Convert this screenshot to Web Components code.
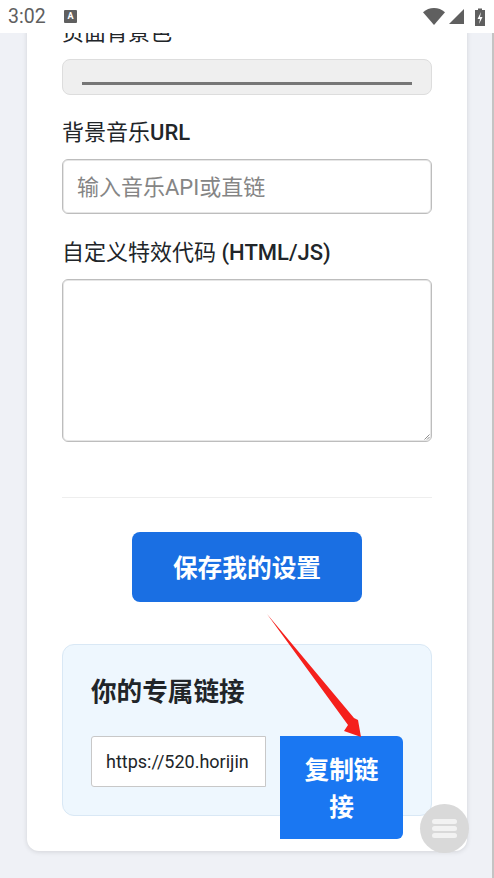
<!DOCTYPE html>
<html lang="zh">
<head>
<meta charset="utf-8">
<title>设置</title>
<style>
  html, body { margin: 0; height: 100%; }
  body {
    display: flex;
    flex-direction: column;
    height: 878px;
    overflow: hidden;
    position: relative;
    background: #eff1f6;
    font-family: Roboto, "Noto Sans CJK SC", sans-serif;
    color: #212529;
  }
</style>
</head>
<body>
<status-bar></status-bar>
<settings-page>
  <settings-field label="页面背景色">
    <color-swatch></color-swatch>
  </settings-field>
  <settings-field label="背景音乐" strong="URL">
    <text-box placeholder>输入音乐API或直链</text-box>
  </settings-field>
  <settings-field label="自定义特效代码" strong="(HTML/JS)">
    <code-box></code-box>
  </settings-field>
  <save-button>保存我的设置</save-button>
  <link-panel heading="你的专属链接">
    <link-box>https://520.horijin</link-box>
    <copy-button>复制链接</copy-button>
  </link-panel>
</settings-page>
<arrow-note></arrow-note>
<menu-fab></menu-fab>

<script>
function shadow(el, html) {
  el.attachShadow({mode: 'open'}).innerHTML = html;
}

class StatusBar extends HTMLElement {
  connectedCallback() {
    shadow(this, `
    <style>
      :host { display: flex; align-items: center; flex: none; height: 33px; background: #fff; color: #5f5f5f; padding: 0 9px 0 8px; }
      .time { font-size: 19.5px; line-height: 33px; width: 56px; }
      .app { width: 13px; height: 13px; background: #5f5f5f; border-radius: 1px; color: #fff; font-size: 9px; font-weight: 700; line-height: 12px; text-align: center; }
      .right { margin-left: auto; display: flex; align-items: center; }
    </style>
    <span class="time">3:02</span>
    <span class="app">A</span>
    <div class="right">
      <svg width="62" height="20" viewBox="0 0 62 20">
        <path d="M0 5.2C3 2.6 7 1 11 1s8 1.600 11 4.200L11 18z" fill="#5f5f5f"/>
        <path d="M26 17L41 2v15z" fill="#5f5f5f"/>
        <path d="M52 3h3V1.500h4V3h3v16H52z" fill="#5f5f5f"/>
        <path d="M58 5l-3.500 7H57l-1 5 3.500-7H57z" fill="#fff"/>
      </svg>
    </div>`);
  }
}

class SettingsPage extends HTMLElement {
  connectedCallback() {
    shadow(this, `
    <style>
      :host { display: flex; flex-direction: column; justify-content: flex-end; flex: 1; min-height: 0; overflow: hidden; padding: 0 25px 27px 27px; border-right: 2px solid #c4c4c4; }
      .card { flex: none; display: flex; flex-direction: column; background: #fff; border-radius: 12px; padding: 0 35px 35px; box-shadow: 0 1px 5px rgba(0,0,0,.12); }
    </style>
    <div class="card"><slot></slot></div>`);
  }
}

class SettingsField extends HTMLElement {
  connectedCallback() {
    let strong = this.getAttribute('strong');
    let sep = strong && strong.startsWith('(') ? ' ' : '';
    shadow(this, `
    <style>
      :host { display: block; margin-bottom: 25px; }
      label { display: block; font-size: 22px; line-height: 28px; margin-bottom: 12px; color: #212529; white-space: nowrap; }
      b { font-weight: 500; }
    </style>
    <label>${this.getAttribute('label')}${sep}<b>${strong || ''}</b></label>
    <slot></slot>`);
  }
}

class ColorSwatch extends HTMLElement {
  connectedCallback() {
    shadow(this, `
    <style>
      :host { display: flex; align-items: flex-end; box-sizing: border-box; height: 36px; margin-bottom: -1px; padding: 0 19px 9px; background: #efefef; border: 1px solid #ddd; border-radius: 8px; }
      i { display: block; flex: 1; height: 3px; background: #767676; }
    </style>
    <i></i>`);
  }
}

class TextBox extends HTMLElement {
  connectedCallback() {
    shadow(this, `
    <style>
      :host { display: block; box-sizing: border-box; height: 55px; padding: 3px 14px 0; border: 1px solid #bdbdbd; box-shadow: inset 0 0 0 1px #e6e6e6; border-radius: 6px; font-size: 22px; line-height: 49px; color: #858585; white-space: nowrap; overflow: hidden; }
    </style>
    <slot></slot>`);
  }
}

class CodeBox extends HTMLElement {
  connectedCallback() {
    shadow(this, `
    <style>
      :host { display: block; position: relative; height: 163px; margin-bottom: -25px; }
      textarea { display: block; box-sizing: border-box; width: 100%; height: 100%; margin: 0; border: 1px solid #bdbdbd; box-shadow: inset 0 0 0 1px #e6e6e6; border-radius: 6px; background: #fff; outline: none; resize: none; }
      svg { position: absolute; right: 2px; bottom: 2px; }
    </style>
    <textarea></textarea>
    <svg width="6" height="6" viewBox="0 0 6 6"><path d="M0.500 5.500L5.500 0.500M3 5.500L5.500 3" stroke="#8f8f8f" stroke-width="1" fill="none"/></svg>`);
  }
}

class SaveButton extends HTMLElement {
  connectedCallback() {
    shadow(this, `
    <style>
      :host { display: block; margin-top: 55px; padding-top: 34px; border-top: 1px solid #eee; margin-bottom: 42px; }
      .btn { width: 230px; height: 70px; margin: 0 auto; background: #1a6fe3; border-radius: 8px; color: #fff; font-size: 24.7px; font-weight: 700; line-height: 73px; text-align: center; }
    </style>
    <div class="btn"><slot></slot></div>`);
  }
}

class LinkPanel extends HTMLElement {
  connectedCallback() {
    shadow(this, `
    <style>
      :host { display: block; box-sizing: border-box; height: 172px; padding: 28px; background: #eef7fe; border: 1px solid #d9e8f5; border-radius: 12px; }
      h3 { margin: 0 0 25px; font-size: 25.6px; line-height: 38px; font-weight: 700; color: #212529; }
      .row { display: flex; align-items: flex-start; gap: 14px; height: 51px; }
    </style>
    <h3>${this.getAttribute('heading')}</h3>
    <div class="row"><slot></slot></div>`);
  }
}

class LinkBox extends HTMLElement {
  connectedCallback() {
    shadow(this, `
    <style>
      :host { display: block; box-sizing: border-box; flex: 1; min-width: 0; height: 51px; padding: 0 14px; background: #fff; border: 1px solid #c8c8c8; border-radius: 3px 0 0 3px; font-size: 18px; line-height: 49px; color: #212529; white-space: nowrap; overflow: hidden; }
    </style>
    <slot></slot>`);
  }
}

class CopyButton extends HTMLElement {
  connectedCallback() {
    shadow(this, `
    <style>
      :host { display: block; box-sizing: border-box; flex: none; width: 123px; height: 103px; padding: 16px 20px; background: #1a77f2; border-radius: 0 6px 6px 0; color: #fff; font-size: 24.7px; font-weight: 700; line-height: 37px; text-align: center; }
    </style>
    <slot></slot>`);
  }
}

class ArrowNote extends HTMLElement {
  connectedCallback() {
    shadow(this, `
    <style>
      :host { position: absolute; left: 260px; top: 610px; width: 110px; height: 130px; pointer-events: none; }
      svg { display: block; }
    </style>
    <svg width="110" height="130" viewBox="260 610 110 130">
      <path d="M267 614L354 718L358 720L361 737L344 731L348 725Z" fill="#f5201c"/>
    </svg>`);
  }
}

class MenuFab extends HTMLElement {
  connectedCallback() {
    shadow(this, `
    <style>
      :host { position: absolute; left: 420px; top: 804px; display: flex; flex-direction: column; justify-content: center; gap: 2px; box-sizing: border-box; width: 49px; height: 49px; padding: 0 12px; background: #d9d9d9; border-radius: 50%; }
      i { display: block; height: 5px; background: #f2f2f2; border-radius: 2.500px; }
    </style>
    <i></i><i></i><i></i>`);
  }
}

customElements.define('status-bar', StatusBar);
customElements.define('settings-page', SettingsPage);
customElements.define('settings-field', SettingsField);
customElements.define('color-swatch', ColorSwatch);
customElements.define('text-box', TextBox);
customElements.define('code-box', CodeBox);
customElements.define('save-button', SaveButton);
customElements.define('link-panel', LinkPanel);
customElements.define('link-box', LinkBox);
customElements.define('copy-button', CopyButton);
customElements.define('arrow-note', ArrowNote);
customElements.define('menu-fab', MenuFab);
</script>
</body>
</html>
